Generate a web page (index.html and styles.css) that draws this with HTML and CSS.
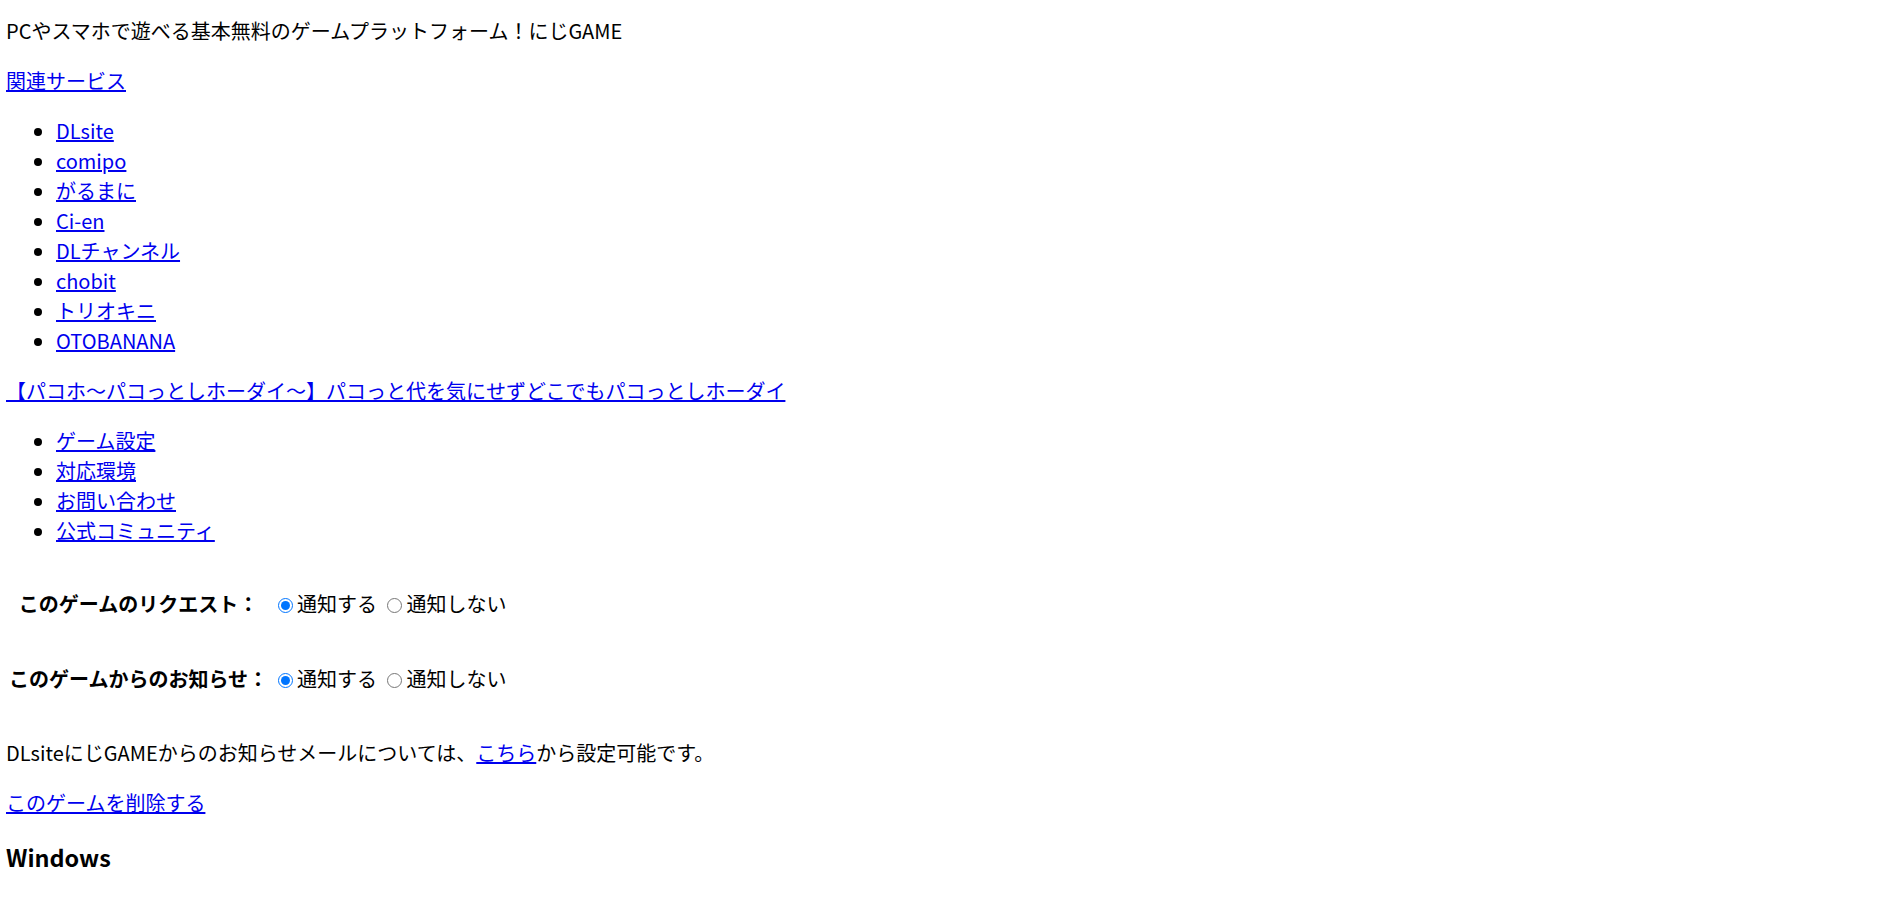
FILE: index.html
```html
<!DOCTYPE html>
<html lang="ja">
<head>
    <meta charset="UTF-8">
    <meta name="viewport" content="width=device-width, initial-scale=1.0">
    <title>にじGAME</title>
    <link rel="stylesheet" href="styles.css">
</head>
<body>
    <p class="catch">PCやスマホで遊べる基本無料のゲームプラットフォーム！にじGAME</p>
    <p><a href="#">関連サービス</a></p>
    <ul>
        <li><a href="#">DLsite</a></li>
        <li><a href="#">comipo</a></li>
        <li><a href="#">がるまに</a></li>
        <li><a href="#">Ci-en</a></li>
        <li><a href="#">DLチャンネル</a></li>
        <li><a href="#">chobit</a></li>
        <li><a href="#">トリオキニ</a></li>
        <li><a href="#">OTOBANANA</a></li>
    </ul>
    <p><a href="#">【パコホ～パコっとしホーダイ～】パコっと代を気にせずどこでもパコっとしホーダイ</a></p>
    <ul>
        <li><a href="#">ゲーム設定</a></li>
        <li><a href="#">対応環境</a></li>
        <li><a href="#">お問い合わせ</a></li>
        <li><a href="#">公式コミュニティ</a></li>
    </ul>
    <table class="notify">
        <tr>
            <th>このゲームのリクエスト：</th>
            <td><input type="radio" name="request" checked>通知する <input type="radio" name="request">通知しない</td>
        </tr>
        <tr>
            <th>このゲームからのお知らせ：</th>
            <td><input type="radio" name="info" checked>通知する <input type="radio" name="info">通知しない</td>
        </tr>
    </table>
    <p>DLsiteにじGAMEからのお知らせメールについては、<a href="#">こちら</a>から設定可能です。</p>
    <p><a href="#">このゲームを削除する</a></p>
    <h3>Windows</h3>
</body>
</html>
```

FILE: styles.css
```css
body {
    margin: 0;
    padding: 0 6px;
    background: #ffffff;
    color: #000000;
    font-family: "Noto Sans CJK JP", "Noto Sans", sans-serif;
    font-size: 20px;
    line-height: 1.5;
}
p {
    margin: 20px 0;
}
.catch {
    margin-top: 16px;
}
a {
    color: #0000ee;
}
ul {
    margin: 20px 0;
    padding-left: 50px;
}
.notify {
    border-spacing: 2px;
}
.notify th,
.notify td {
    padding: 21px 1px 22px;
}
.notify td {
    white-space: nowrap;
}
.notify input {
    width: 15px;
    height: 15px;
    margin: 0 4px 0 6px;
    vertical-align: -1px;
}
h3 {
    font-size: 1.17em;
    margin: 1em 0;
    line-height: 1.45;
}
```
